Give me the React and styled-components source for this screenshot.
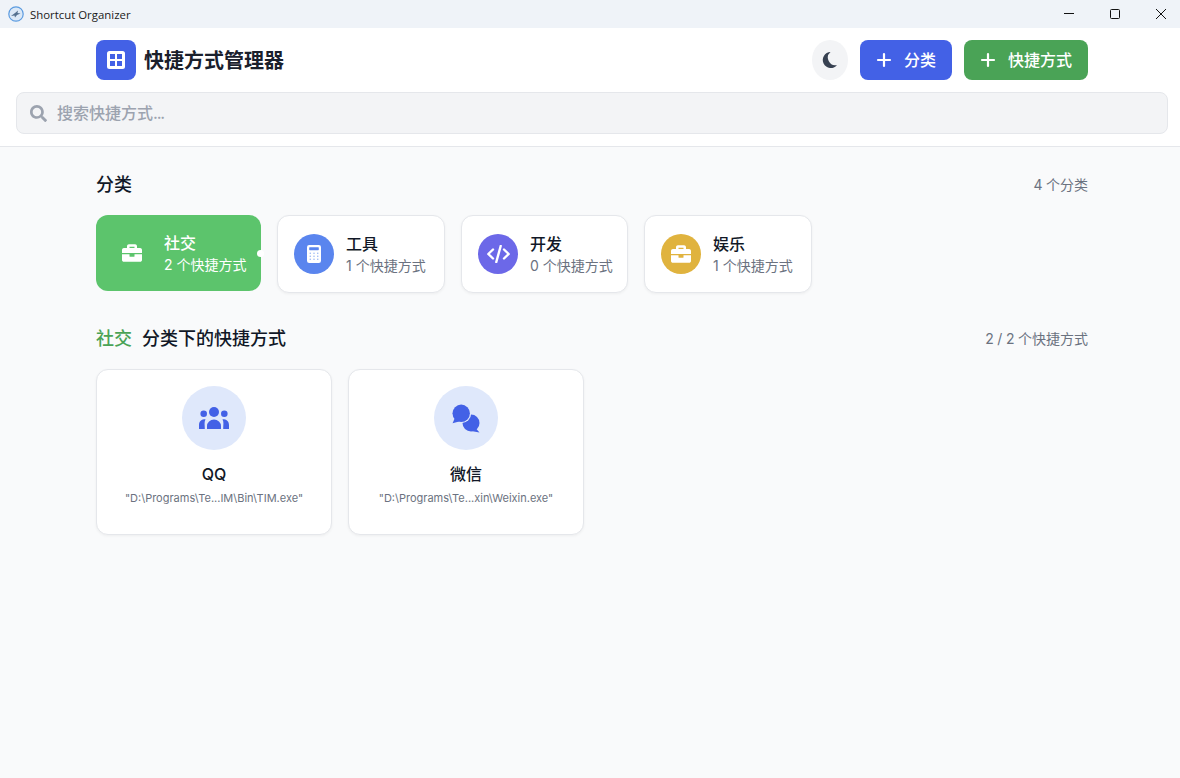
import React from "react";
import styled, { createGlobalStyle } from "styled-components";
import { FaBriefcase, FaSearch } from "react-icons/fa";

const Global = createGlobalStyle`
  * { box-sizing: border-box; margin: 0; padding: 0; }
  html, body, #root { height: 100%; }
  body {
    background: #f9fafb;
    color: #111827;
    font-family: Inter, "Noto Sans CJK SC", sans-serif;
    overflow: hidden;
  }
`;

// the window is a little wider than the picture, its right edge is cut off
const Page = styled.div`
  width: 1184px;
  height: 778px;
  display: flex;
  flex-direction: column;
`;

const TitleBar = styled.div`
  height: 28px;
  flex: none;
  background: #eff3f8;
  display: flex;
  align-items: center;
  padding-left: 8px;
  gap: 6px;
`;

const TitleText = styled.span`
  flex: 1;
  font-family: "Open Sans", sans-serif;
  font-size: 11.4px;
  color: #1a1a1a;
`;

const WinButtons = styled.div`
  display: flex;
`;

const WinButton = styled.div`
  width: 46px;
  height: 28px;
  display: flex;
  align-items: center;
  justify-content: center;
`;

const Header = styled.header`
  background: #fff;
  border-bottom: 1px solid #e5e7eb;
  height: 119px;
  flex: none;
  padding: 12px 16px 0;
`;

const HeaderRow = styled.div`
  width: 992px;
  margin: 0 auto 12px;
  height: 40px;
  display: flex;
  align-items: center;
  justify-content: space-between;
`;

const Brand = styled.div`
  display: flex;
  align-items: center;
  gap: 8px;
`;

const Logo = styled.div`
  width: 40px;
  height: 40px;
  border-radius: 8px;
  background: #4361e6;
  display: flex;
  align-items: center;
  justify-content: center;
`;

const AppName = styled.h1`
  font-size: 20px;
  font-weight: 700;
  line-height: 28px;
  padding-top: 1px;
  color: #1a202c;
`;

const Actions = styled.div`
  display: flex;
  align-items: center;
  gap: 12px;
`;

const ThemeButton = styled.button`
  width: 36px;
  height: 40px;
  border: 0;
  border-radius: 50%;
  background: #f3f4f6;
  color: #374151;
  display: flex;
  align-items: center;
  justify-content: center;
`;

const AddButton = styled.button`
  height: 40px;
  padding: 0 16px;
  border: 0;
  border-radius: 8px;
  background: ${(p) => p.$bg};
  color: #fff;
  font-family: inherit;
  font-size: 16px;
  font-weight: 500;
  display: flex;
  align-items: center;
  gap: 12px;
`;

const ButtonLabel = styled.span`
  line-height: 22px;
`;

const SearchBox = styled.div`
  height: 42px;
  border: 1px solid #e5e7eb;
  border-radius: 8px;
  background: #f3f4f6;
  display: flex;
  align-items: center;
  gap: 10px;
  padding-left: 13px;
  color: #9ca3af;
  font-size: 16px;
  font-weight: 500;
`;

const Placeholder = styled.span`
  line-height: 22px;
  padding-bottom: 1px;
`;

const Dots = styled.span`
  letter-spacing: -1.2px;
`;

const Main = styled.main`
  width: 992px;
  margin: 0 auto;
  padding-top: 25px;
`;

const SectionHead = styled.div`
  height: 26px;
  display: flex;
  align-items: center;
  justify-content: space-between;
  margin-bottom: 17px;
`;

const SectionTitle = styled.h2`
  font-size: 18px;
  font-weight: 500;
  line-height: 26px;
  color: #111827;
  display: flex;
  gap: 10px;
`;

const Accent = styled.span`
  color: #4aa356;
`;

const Count = styled.span`
  font-size: 14px;
  line-height: 20px;
  word-spacing: -0.4px;
  color: #6b7280;
`;

const CategoryRow = styled.div`
  display: flex;
  align-items: flex-start;
  gap: 16px;
  margin-bottom: 33px;
`;

const CategoryCard = styled.div`
  position: relative;
  display: flex;
  align-items: center;
  gap: 12px;
  padding: 16px;
  height: ${(p) => (p.$active ? 76 : 78)}px;
  border-radius: 12px;
  background: ${(p) => (p.$active ? "#5cc46c" : "#fff")};
  border: ${(p) => (p.$active ? "0" : "1px solid #e5e7eb")};
  box-shadow: ${(p) => (p.$active ? "none" : "0 1px 3px rgba(0, 0, 0, 0.05)")};
  color: ${(p) => (p.$active ? "#fff" : "#111827")};
`;

const Dot = styled.span`
  position: absolute;
  right: -3px;
  top: 35px;
  width: 7px;
  height: 7px;
  border-radius: 50%;
  background: #fff;
`;

const CategoryIcon = styled.div`
  width: 40px;
  height: 40px;
  border-radius: 50%;
  background: ${(p) => p.$bg};
  color: #fff;
  font-size: 20px;
  display: flex;
  align-items: center;
  justify-content: center;
`;

const CategoryText = styled.div`
  width: ${(p) => p.$w}px;
  padding-top: 2px;
  white-space: nowrap;
`;

const CategoryName = styled.div`
  font-size: 16px;
  font-weight: 500;
  line-height: 22px;
`;

const CategoryMeta = styled.div`
  font-size: 14px;
  line-height: 22px;
  color: ${(p) => (p.$active ? "#fff" : "#6b7280")};
`;

const ShortcutGrid = styled.div`
  display: grid;
  grid-template-columns: repeat(4, 1fr);
  gap: 16px;
`;

const ShortcutCard = styled.div`
  height: 166px;
  padding-top: 16px;
  border: 1px solid #e5e7eb;
  border-radius: 12px;
  background: #fff;
  box-shadow: 0 1px 3px rgba(0, 0, 0, 0.05);
  display: flex;
  flex-direction: column;
  align-items: center;
`;

const ShortcutIcon = styled.div`
  width: 64px;
  height: 64px;
  border-radius: 50%;
  background: #dfe8fb;
  color: #4361e6;
  display: flex;
  align-items: center;
  justify-content: center;
  margin-bottom: 14px;
`;

const ShortcutName = styled.div`
  font-size: 16px;
  font-weight: 500;
  line-height: 20px;
  color: #111827;
`;

const ShortcutPath = styled.div`
  font-size: 11px;
  line-height: 16px;
  margin-top: 6px;
  color: #6b7280;
`;

const AppIcon = () => (
  <svg width="16" height="16" viewBox="0 0 16 16">
    <circle cx="8" cy="8" r="7.2" fill="#dbe8f6" stroke="#5b9be0" strokeWidth="1.2" />
    <path d="M3 10 L7 7 L10 4.5 L9.5 7 L12.5 7.5 L9 9 L7 11.5 L6.5 9.5 Z" fill="#54708f" />
  </svg>
);

const Minimize = () => (
  <svg width="10" height="10" viewBox="0 0 10 10">
    <path d="M0 4.5h10" stroke="#111" strokeWidth="1" />
  </svg>
);

const Maximize = () => (
  <svg width="10" height="10" viewBox="0 0 10 10">
    <rect x="0.5" y="0.5" width="9" height="9" rx="1" fill="none" stroke="#111" strokeWidth="1" />
  </svg>
);

const Close = () => (
  <svg width="10" height="10" viewBox="0 0 10 10">
    <path d="M0 0l10 10M10 0L0 10" stroke="#111" strokeWidth="1" />
  </svg>
);

const GridIcon = () => (
  <svg width="18" height="18" viewBox="0 0 18 18">
    <rect width="18" height="18" rx="2.5" fill="#fff" />
    <rect x="3" y="3" width="5" height="5" fill="#4361e6" />
    <rect x="10" y="3" width="5" height="5" fill="#4361e6" />
    <rect x="3" y="10" width="5" height="5" fill="#4361e6" />
    <rect x="10" y="10" width="5" height="5" fill="#4361e6" />
  </svg>
);

const MoonIcon = () => (
  <svg width="16" height="16" viewBox="0 0 16 16">
    <path d="M8.5 0A8 8 0 1 0 15 13A7.5 7.5 0 0 1 8.5 0Z" fill="currentColor" />
  </svg>
);

const PlusIcon = () => (
  <svg width="16" height="16" viewBox="0 0 16 16">
    <path d="M8 2v12M2 8h12" stroke="currentColor" strokeWidth="2.2" strokeLinecap="round" />
  </svg>
);

const CalculatorIcon = () => (
  <svg width="14" height="18" viewBox="0 0 14 18">
    <rect width="14" height="18" rx="2.2" fill="#fff" />
    <rect x="2.2" y="2.2" width="9.6" height="3" rx="0.6" fill="#5a85ee" />
    {[7.6, 10.6, 13.6].map((y) =>
      [2.6, 6.3, 10].map((x) => (
        <rect key={`${x}-${y}`} x={x} y={y} width="1.4" height="1.4" fill="#a9c0f6" />
      ))
    )}
  </svg>
);

const CodeIcon = () => (
  <svg width="23" height="18" viewBox="0 0 23 18">
    <path
      d="M6 4.5L1.3 9L6 13.5M17 4.5L21.7 9L17 13.5M13.7 1L9.3 17"
      fill="none"
      stroke="currentColor"
      strokeWidth="2.4"
      strokeLinecap="round"
      strokeLinejoin="round"
    />
  </svg>
);

const UsersIcon = () => (
  <svg width="30" height="22" viewBox="0 0 30 22">
    <g fill="currentColor">
      <circle cx="15" cy="5" r="5" />
      <circle cx="4.7" cy="6.7" r="3.3" />
      <circle cx="25.3" cy="6.7" r="3.3" />
      <path d="M8 22V19A7 6.5 0 0 1 15 12.5A7 6.5 0 0 1 22 19V22Z" />
      <path d="M0 22V18C0 14 2.5 12.2 6.5 12.2C5 15 5.8 18 5.8 22Z" />
      <path d="M30 22V18C30 14 27.5 12.2 23.5 12.2C25 15 24.2 18 24.2 22Z" />
    </g>
  </svg>
);

const CommentsIcon = () => (
  <svg width="28" height="29" viewBox="0 0 28 29">
    <circle cx="19" cy="19" r="8.5" fill="currentColor" />
    <path d="M24 24.5L27.5 28.5L19 27Z" fill="currentColor" />
    <circle cx="9.2" cy="9.3" r="10" fill="#dfe8fb" />
    <circle cx="9.2" cy="9.3" r="8.7" fill="currentColor" />
    <path d="M2.8 14L0.6 19.2L7 17.5Z" fill="currentColor" />
  </svg>
);

const categories = [
  { name: "社交", meta: "2 个快捷方式", icon: FaBriefcase, bg: "transparent", active: true, w: 81 },
  { name: "工具", meta: "1 个快捷方式", icon: CalculatorIcon, bg: "#5a85ee", w: 82 },
  { name: "开发", meta: "0 个快捷方式", icon: CodeIcon, bg: "#6c68e8", w: 81 },
  { name: "娱乐", meta: "1 个快捷方式", icon: FaBriefcase, bg: "#e0b33e", w: 82 },
];

const shortcuts = [
  { name: "QQ", path: '"D:\\Programs\\Te...IM\\Bin\\TIM.exe"', icon: UsersIcon },
  { name: "微信", path: '"D:\\Programs\\Te...xin\\Weixin.exe"', icon: CommentsIcon },
];

export default function App() {
  return (
    <Page>
      <Global />
      <TitleBar>
        <AppIcon />
        <TitleText>Shortcut Organizer</TitleText>
        <WinButtons>
          <WinButton><Minimize /></WinButton>
          <WinButton><Maximize /></WinButton>
          <WinButton><Close /></WinButton>
        </WinButtons>
      </TitleBar>
      <Header>
        <HeaderRow>
          <Brand>
            <Logo><GridIcon /></Logo>
            <AppName>快捷方式管理器</AppName>
          </Brand>
          <Actions>
            <ThemeButton><MoonIcon /></ThemeButton>
            <AddButton $bg="#4361e6"><PlusIcon /><ButtonLabel>分类</ButtonLabel></AddButton>
            <AddButton $bg="#4aa356"><PlusIcon /><ButtonLabel>快捷方式</ButtonLabel></AddButton>
          </Actions>
        </HeaderRow>
        <SearchBox>
          <FaSearch size={17} />
          <Placeholder>搜索快捷方式<Dots>...</Dots></Placeholder>
        </SearchBox>
      </Header>
      <Main>
        <SectionHead>
          <SectionTitle>分类</SectionTitle>
          <Count>4 个分类</Count>
        </SectionHead>
        <CategoryRow>
          {categories.map((c) => (
            <CategoryCard key={c.name} $active={c.active}>
              <CategoryIcon $bg={c.bg}><c.icon /></CategoryIcon>
              <CategoryText $w={c.w}>
                <CategoryName>{c.name}</CategoryName>
                <CategoryMeta $active={c.active}>{c.meta}</CategoryMeta>
              </CategoryText>
              {c.active && <Dot />}
            </CategoryCard>
          ))}
        </CategoryRow>
        <SectionHead>
          <SectionTitle><Accent>社交</Accent>分类下的快捷方式</SectionTitle>
          <Count>2 / 2 个快捷方式</Count>
        </SectionHead>
        <ShortcutGrid>
          {shortcuts.map((s) => (
            <ShortcutCard key={s.name}>
              <ShortcutIcon><s.icon /></ShortcutIcon>
              <ShortcutName>{s.name}</ShortcutName>
              <ShortcutPath>{s.path}</ShortcutPath>
            </ShortcutCard>
          ))}
        </ShortcutGrid>
      </Main>
    </Page>
  );
}
